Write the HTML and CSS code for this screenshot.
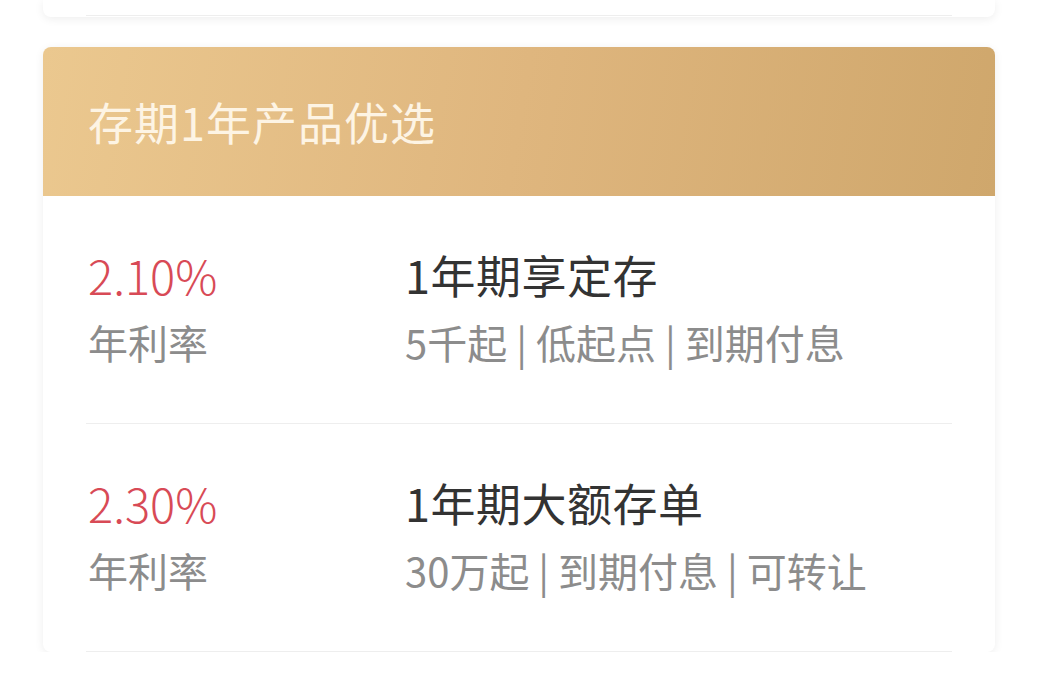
FILE: index.html
```html
<!DOCTYPE html>
<html lang="zh-CN">
<head>
    <meta charset="UTF-8">
    <meta name="viewport" content="width=device-width, initial-scale=1.0">
    <title>存期1年产品优选</title>
    <link rel="stylesheet" href="styles.css">
</head>
<body>
    <div class="card card-prev">
        <div class="prev-line"></div>
    </div>

    <section class="card">
        <header class="card-head">存期1年产品优选</header>

        <div class="product">
            <div class="product-inner">
                <div class="rate-col">
                    <div class="rate">2.10%</div>
                    <div class="rate-label">年利率</div>
                </div>
                <div class="info-col">
                    <div class="name">1年期享定存</div>
                    <div class="tags">5千起 | 低起点 | 到期付息</div>
                </div>
            </div>
        </div>

        <div class="product">
            <div class="product-inner">
                <div class="rate-col">
                    <div class="rate">2.30%</div>
                    <div class="rate-label">年利率</div>
                </div>
                <div class="info-col">
                    <div class="name">1年期大额存单</div>
                    <div class="tags">30万起 | 到期付息 | 可转让</div>
                </div>
            </div>
        </div>
    </section>
</body>
</html>
```

FILE: styles.css
```css
body {
    font-family: "Noto Sans CJK SC", "Noto Sans", sans-serif;
    margin: 0;
    padding: 0;
    background-color: #fff;
}

.card {
    margin: 0 43px;
    background-color: #fff;
    border-radius: 8px;
    box-shadow: 0 2px 10px rgba(0, 0, 0, 0.07);
    overflow: hidden;
}

.card-prev {
    height: 17px;
    border-radius: 0 0 8px 8px;
    padding: 0 43px;
    margin-bottom: 30px;
}

.prev-line {
    height: 15px;
    border-bottom: 1px solid #eee;
}

.card-head {
    height: 149px;
    padding-left: 45px;
    display: flex;
    align-items: center;
    background: linear-gradient(100deg, #ebc88f 0%, #dfb67e 50%, #cfa76c 100%);
    color: #fdf4e4;
    font-size: 45px;
    letter-spacing: 1px;
}

.product {
    padding: 0 43px;
}

.product-inner {
    height: 227px;
    border-bottom: 1px solid #eee;
    display: flex;
    padding-left: 2px;
}

.rate-col {
    width: 317px;
}

.rate {
    padding-top: 50px;
    font-size: 47px;
    line-height: 58px;
    color: #d84a56;
    font-weight: 300;
}

.rate-label,
.tags {
    margin-top: 14px;
    font-size: 40px;
    line-height: 48px;
    color: #8c8c8c;
}

.name {
    padding-top: 50px;
    font-size: 45px;
    line-height: 58px;
    color: #333;
    letter-spacing: 0.5px;
}
```
